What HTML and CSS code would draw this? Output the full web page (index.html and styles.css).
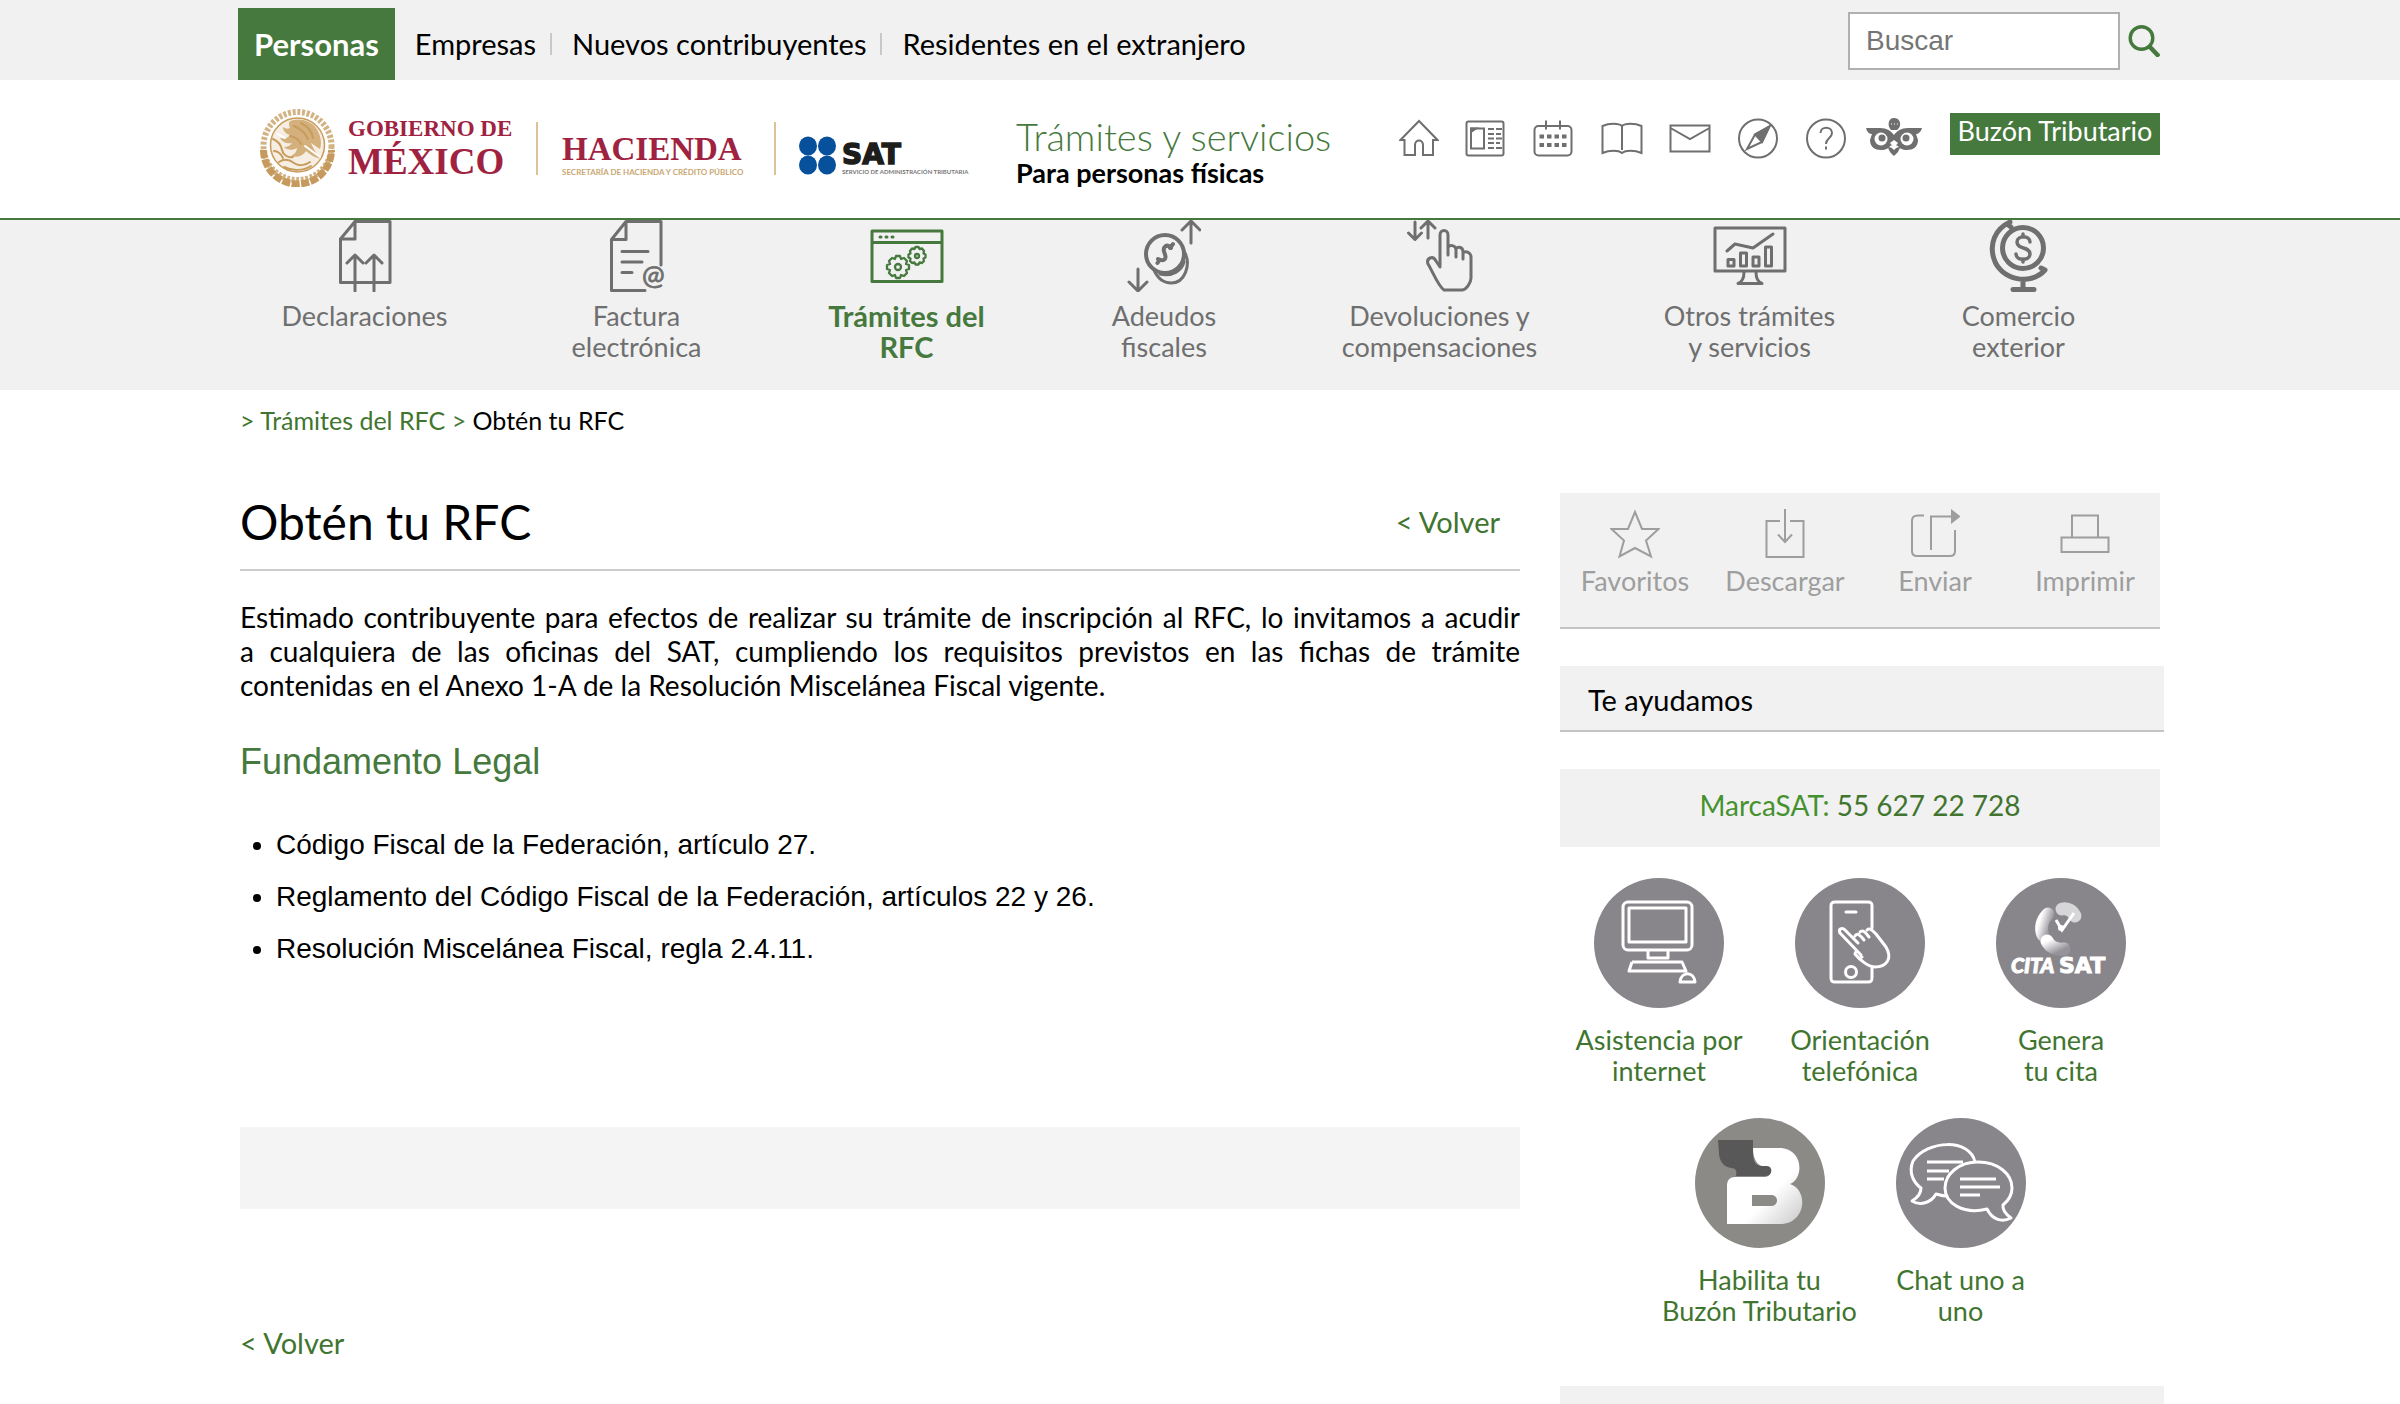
FILE: index.html
```html
<!DOCTYPE html>
<html lang="es">
<head>
<meta charset="utf-8">
<meta name="viewport" content="width=device-width, initial-scale=1">
<title>Obtén tu RFC - Trámites y servicios - SAT</title>
<link rel="stylesheet" href="styles.css">
</head>
<body>
<div class="topbar">
  <div class="container topbar-inner">
    <nav class="audience" aria-label="Tipo de contribuyente">
      <a class="tab tab-active" href="#">Personas</a>
      <a class="tab" href="#">Empresas</a>
      <a class="tab" href="#">Nuevos contribuyentes</a>
      <a class="tab" href="#">Residentes en el extranjero</a>
    </nav>
    <form class="search" role="search">
      <input class="search-input" type="search" placeholder="Buscar" aria-label="Buscar">
      <button class="search-button" type="submit" aria-label="Buscar">
        <svg width="32" height="32" viewBox="0 0 32 32" fill="none" stroke="#46793d" stroke-width="3.4"><circle cx="13.500" cy="13" r="11.300"/><path d="M21.500 21.500L31 31.500" stroke-width="4.500"/></svg>
      </button>
    </form>
  </div>
</div>

<header class="header">
  <div class="container header-inner">
    <a class="brand" href="#" aria-label="Gobierno de México, Hacienda, SAT">
      <svg width="716" height="80" viewBox="0 0 716 80">
        <g fill="none" stroke="#c79c5c">
          <circle cx="37.500" cy="39" r="34" stroke="#d3b283" stroke-width="6" stroke-dasharray="3 1.700"/>
          <path d="M3.500 43A34 34 0 0 0 71.500 43" stroke="#c59a5c" stroke-width="7" stroke-dasharray="8 1.500"/>
          <circle cx="37.500" cy="38" r="27" fill="#f6eee2" stroke-width="1.500"/>
        </g>
        <path d="M29 15c8-5 21-2 27 6 5 7 6 15 4 21l-9-6c3 8 8 14 11 16-6-1-12-4-16-8-3 5-9 7-15 5 4-2 6-5 6-8-5 3-10 2-13-1 4 0 7-2 8-4-6 1-10-1-12-5 5 1 8 0 10-3-4-1-7-4-7-8 3 2 5 2 7 1-1-2-1-4-1-6z" fill="#d3b07c"/>
        <g fill="none" stroke="#c79c5c" stroke-width="2" stroke-linecap="round">
          <path d="M13 32c5 2 8 6 9 11s6 8 11 7M14 44c4 0 7 3 9 7M19 55c6-4 11-2 15 1s11 3 16-1M24 60c8 4 19 4 27-1M34 19c5 2 11 6 14 13M41 16c6 3 11 8 12 15M30 29c5 1 9 4 11 8"/>
          <path d="M45 39l15 11M18 27l7 4" stroke="#fff"/>
        </g>
        <g fill="#9f2241" font-family="'Liberation Serif', serif" font-weight="700">
          <text x="88" y="29" font-size="23">GOBIERNO DE</text>
          <text x="88" y="67" font-size="37">MÉXICO</text>
          <text x="302" y="53" font-size="33">HACIENDA</text>
        </g>
        <path d="M277 15v53M515 15v53" stroke="#dcc19a" stroke-width="2"/>
        <text x="302" y="68" font-family="Lato, sans-serif" font-weight="700" font-size="8" fill="#c9a873">SECRETARÍA DE HACIENDA Y CRÉDITO PÚBLICO</text>
        <g fill="#07519c"><ellipse cx="548" cy="39" rx="9" ry="9.500"/><ellipse cx="567" cy="39" rx="9" ry="9.500"/><ellipse cx="548" cy="58" rx="9" ry="9.500"/><ellipse cx="567" cy="58" rx="9" ry="9.500"/></g>
        <text x="582" y="57" font-family="'DejaVu Sans', sans-serif" font-weight="700" font-size="28" fill="#1d1d1b" stroke="#1d1d1b" stroke-width="1.500">SAT</text>
        <text x="582" y="67" font-family="Lato, sans-serif" font-weight="700" font-size="6" fill="#777">SERVICIO DE ADMINISTRACIÓN TRIBUTARIA</text>
      </svg>
    </a>
    <div class="site-title">
      <p class="site-name">Trámites y servicios</p>
      <p class="site-sub">Para personas físicas</p>
    </div>
    <nav class="quick" aria-label="Accesos rápidos">
      <a href="#" aria-label="Inicio"><svg width="40" height="40" viewBox="0 0 40 40" class="line"><path d="M5 22H1.500L20 3l18.500 19H34v15H24V27c0-6-8-6-8 0v10H5.500V21"/></svg></a>
      <a href="#" aria-label="Noticias"><svg width="40" height="40" viewBox="0 0 40 40" class="line"><rect x="1.500" y="3.500" width="37" height="34" rx="2"/><path d="M6 10.500h13v20H6z"/><path d="M6 30V14l5-3.500H6z" fill="#6f6f6f"/><path d="M23 11h6M31 11h6M23 16h6M31 16h5M23 20.500h6M31 20.500h6M23 25h6M31 25h4M23 30h6M31 30h6"/></svg></a>
      <a href="#" aria-label="Calendario"><svg width="40" height="40" viewBox="0 0 40 40" class="line"><rect x="1.500" y="8" width="37" height="29.500" rx="4"/><path d="M13 2.500v9M27 2.500v9"/><path d="M6.500 18.500h27M6.500 27h27" stroke-width="4" stroke-dasharray="4.500 3"/></svg></a>
      <a href="#" aria-label="Biblioteca"><svg width="42" height="40" viewBox="0 0 42 40" class="line"><path d="M21 8c-3-3-13-3-19.500 0v27c7-3 16-3 19.500 0 3.500-3 12.500-3 19.500 0V8C34 5 24 5 21 8zM21 8v24"/></svg></a>
      <a href="#" aria-label="Correo"><svg width="42" height="40" viewBox="0 0 42 40" class="line"><path d="M1.500 7.500h39v26h-39zM1.500 10L21 21l19.500-11"/></svg></a>
      <a href="#" aria-label="Guía"><svg width="42" height="42" viewBox="0 0 42 42" class="line"><circle cx="21" cy="20.500" r="19"/><path d="M32.500 8.500L18 16.500 10 31l15-7z"/><path d="M32.500 8.500L18 16.500l7 7.500z" fill="#6f6f6f"/></svg></a>
      <a href="#" aria-label="Ayuda"><svg width="42" height="42" viewBox="0 0 42 42" class="line"><circle cx="21" cy="20.500" r="19"/><path d="M15.500 15c0-7 11.500-7 11.500 0 0 5-6 5-6 11M21 28.500v3"/></svg></a>
    </nav>
    <a class="owl" href="#" aria-label="Portal"><svg width="56" height="40" viewBox="0 0 56 40" fill="#6f6f6f"><path d="M28 0c5 0 8 5 5 10-1 1-2 2-2 2h-6c-4-4-3-12 3-12zM0 10h14c7 0 11 3 14 7 3-4 7-7 14-7h14c-1 4-4 6-6 6l2 6c0 7-5 10-11 10-5 0-8-2-9-4-1-1-7-1-8 0-1 2-4 4-9 4C9 32 4 29 4 22l2-6c-3 0-5-2-6-6z"/><circle cx="15" cy="21" r="6.500" fill="#fff"/><circle cx="41" cy="21" r="6.500" fill="#fff"/><circle cx="16" cy="20" r="3.500"/><circle cx="40" cy="20" r="3.500"/><path d="M28 22l4 3-4 5-4-5z" fill="#fff"/><path d="M22 29c3 0 4 1 6 3 2-2 3-3 6-3-1 5-4 7-6 9-2-2-5-4-6-9z"/><path d="M25 6h1M28 6h1M31 6h1" stroke="#fff"/></svg></a>
    <a class="mailbox" href="#">Buzón Tributario</a>
  </div>
</header>

<div class="mainnav">
  <div class="container">
    <nav class="mainnav-grid" aria-label="Trámites">
      <a class="nav-item" href="#"><svg width="56" height="72" viewBox="0 0 56 72" class="navline"><path d="M18 1.500h35v61H3.500V19z"/><path d="M18 1.500v17.500H3.500"/><path d="M18 71V36M10 43l8-8 8 8M37 71V36M29 43l8-8 8 8"/></svg><span>Declaraciones</span></a>
      <a class="nav-item" href="#"><svg width="58" height="72" viewBox="0 0 58 72" class="navline"><path d="M53 45V1.500H18L3.500 19.500v51H37M18 1.500v18H3.500M14 31.500h26M14 42h20M14 52.500h10"/><text x="34" y="65" font-family="Lato, sans-serif" font-size="27" fill="#6f6f6f" stroke="#6f6f6f" stroke-width=".8">@</text></svg><span>Factura<br>electrónica</span></a>
      <a class="nav-item nav-active" href="#"><svg width="74" height="72" viewBox="0 0 74 72" class="navline"><path d="M2 11h70v50.500H2zM2 22.500h70"/><path d="M10 17h1M16 17h1M22 17h1"/><g stroke-width="2.300"><path d="M26 36h4l1 3 3-1 3 3-1 3 3 1v4l-3 1 1 3-3 3-3-1-1 3h-4l-1-3-3 1-3-3 1-3-3-1v-4l3-1-1-3 3-3 3 1z"/><circle cx="28" cy="47" r="3"/><path d="M45.500 27h3l1 2 2.500-.500 2 2.500-.500 2.500 2 1v3l-2 1 .500 2.500-2 2-2.500-.500-1 2h-3l-1-2-2.500.500-2-2 .500-2.500-2-1v-3l2-1-.500-2.500 2-2.500 2.500.500z"/><circle cx="47" cy="36" r="2"/></g></svg><span>Trámites del<br>RFC</span></a>
      <a class="nav-item" href="#"><svg width="74" height="72" viewBox="0 0 74 72" class="navline"><circle cx="38" cy="34" r="19" stroke-width="4"/><path d="M57.500 32c7 13 0 31-13 31-8 0-14-4-18-14M57 42c-2 8-11 15-24 12" stroke-width="3"/><path d="M44 28c-4-5-9-1-6.500 5s0 9-6.500 6M30.500 43l2-3M43 28l3-4" stroke-width="4"/><path d="M64 23V3M55 10l9-9 9 9M11 49v20M2 62l9 9 9-9"/></svg><span>Adeudos<br>fiscales</span></a>
      <a class="nav-item" href="#"><svg width="66" height="72" viewBox="0 0 66 72" class="navline"><path d="M8 2v17M1.500 13L8 19.500 14.500 13M21 18V2M14 8l7-7 7 7M33 46V15c0-6 8-6 8 0v20M41 28c1-4 8-3 8 2v7M49 29c2-3 7-2 7 3v7M56 33c3-3 8 0 8 4v21c0 5-5 12-9 12H37c-6-4-11-18-16-26-2-6 5-9 8-3l4 6"/></svg><span>Devoluciones y<br>compensaciones</span></a>
      <a class="nav-item" href="#"><svg width="74" height="72" viewBox="0 0 74 72" class="navline"><path d="M2 8h70v43H2z"/><path d="M14 31l8-7 18 4 20-14M15 39.500h6V46h-6zM27.500 33h6v13h-6zM40 37h6v9h-6zM52.500 27h6v19h-6z"/><path d="M31 52c0 6-2 10-6 11.500h24c-4-1.500-6-5.500-6-11.500"/></svg><span>Otros trámites<br>y servicios</span></a>
      <a class="nav-item" href="#"><svg width="60" height="72" viewBox="0 0 60 72" class="navline"><circle cx="34" cy="28" r="20.500" stroke-width="5"/><path d="M21 2C6 9 0 24 5 39c6 20 36 28 51 11M18 4l4 3M52 48l4 2M34 60v9M24 69.500h21" stroke-width="5"/><path d="M41 22c0-7-13-7-13 0 0 8 13 4 13 12 0 7-14 7-14 0M34 14v3M34 39v3" stroke-width="3.500"/></svg><span>Comercio<br>exterior</span></a>
    </nav>
  </div>
</div>

<nav class="container breadcrumb" aria-label="Ruta">
  <a href="#">&gt; Trámites del RFC</a> <span class="crumb-sep">&gt;</span> <span>Obtén tu RFC</span>
</nav>

<div class="container columns">
  <main class="content">
    <div class="page-head">
      <h1>Obtén tu RFC</h1>
      <a class="back" href="#">&lt; Volver</a>
    </div>
    <p class="intro">Estimado contribuyente para efectos de realizar su trámite de inscripción al RFC, lo invitamos a acudir a&nbsp;cualquiera de las oficinas del SAT, cumpliendo los requisitos previstos en las fichas de trámite contenidas en el Anexo 1-A de la Resolución Miscelánea Fiscal vigente.</p>
    <h2>Fundamento Legal</h2>
    <ul class="legal">
      <li>Código Fiscal de la Federación, artículo 27.</li>
      <li>Reglamento del Código Fiscal de la Federación, artículos 22 y 26.</li>
      <li>Resolución Miscelánea Fiscal, regla 2.4.11.</li>
    </ul>
    <div class="band"></div>
    <a class="back back-bottom" href="#">&lt; Volver</a>
  </main>

  <aside class="sidebar">
    <div class="tools">
      <button type="button" class="tool"><svg width="50" height="50" viewBox="0 0 50 50" class="toolline"><path d="M25 3l7 17h16.500L36 31.500 41 47.500 25 39 9.500 47.500 14 31.500 1.500 20H18z"/></svg>Favoritos</button>
      <button type="button" class="tool"><svg width="50" height="50" viewBox="0 0 50 50" class="toolline"><path d="M20 12H6.500v36h37V12H30M25 0v32M18 25.500l7 7.500 7-7.500"/></svg>Descargar</button>
      <button type="button" class="tool"><svg width="50" height="50" viewBox="0 0 50 50" class="toolline"><path d="M14 6.500H8c-4 0-6 2-6 5V42c0 3 2 5 5 5h33c3 0 5-2 5-5V21M21 41V7.500h22"/><path d="M42 2v11l7-5.500z" fill="#9e9e9e"/></svg>Enviar</button>
      <button type="button" class="tool"><svg width="50" height="50" viewBox="0 0 50 50" class="toolline"><path d="M12 28V6.500h26V28M1.500 28.500h47v14.500h-47z"/></svg>Imprimir</button>
    </div>
    <h3 class="panel-title">Te ayudamos</h3>
    <p class="phone"><span class="phone-label">MarcaSAT:</span> <a href="tel:5562722728">55 627 22 728</a></p>
    <div class="help">
      <a class="help-item" href="#"><svg width="130" height="130" viewBox="0 0 130 130"><circle cx="65" cy="65" r="65" fill="#89868b"/><g fill="none" stroke="#fff" stroke-width="3" stroke-linejoin="round"><rect x="29" y="24" width="69" height="48" rx="5"/><path d="M35 30h57v34H35zM54 73v7h20v-7M38 84h50l4 9H35l3-9M86 104c1-11 14-11 15 0z"/></g></svg><span>Asistencia por<br>internet</span></a>
      <a class="help-item" href="#"><svg width="130" height="130" viewBox="0 0 130 130"><circle cx="65" cy="65" r="65" fill="#89868b"/><g fill="none" stroke="#fff" stroke-width="3" stroke-linejoin="round" stroke-linecap="round"><path d="M77 50V28c0-3-1-4-4-4H40c-3 0-4 1-4 4v72c0 3 1 4 4 4h33c3 0 4-1 4-4V89M51 34h10"/><circle cx="56" cy="94" r="5.500"/><path d="M66 77L45 55c-2-4 2-6 5-3l13 13M60 58c2-4 6 0 9 4M65 54c3-3 6 1 9 5M72 52c3-3 7 2 9 4l10 13c7 12 0 20-11 20-7 0-16-8-20-13 1-5 4-2 7 3"/></g></svg><span>Orientación<br>telefónica</span></a>
      <a class="help-item" href="#"><svg width="130" height="130" viewBox="0 0 130 130"><defs><linearGradient id="arc" x1="0" y1="0" x2="1" y2="1"><stop offset="0" stop-color="#fff"/><stop offset="1" stop-color="#96939a"/></linearGradient></defs><circle cx="65" cy="65" r="65" fill="#89868b"/><g fill="none" stroke="url(#arc)" stroke-width="13" stroke-linecap="round"><path d="M52 36c-6 6-8 14-5 21"/><path d="M51 63c3 6 9 9 17 8"/><path d="M66 31c5-1 10 1 13 7" stroke="#d6d5d8"/></g><path d="M60 42l6 10 12-17" fill="none" stroke="#fff" stroke-width="3"/><circle cx="65" cy="50" r="3" fill="#fff"/><g font-weight="900" fill="#fff" stroke="#fff"><text x="15" y="95" font-size="21" font-style="italic" font-family="Lato, sans-serif">CITA</text><text x="63" y="95" font-size="22" font-family="'DejaVu Sans', sans-serif">SAT</text></g></svg><span>Genera<br>tu cita</span></a>
      <a class="help-item" href="#"><svg width="130" height="130" viewBox="0 0 130 130"><defs><linearGradient id="bee" x1="0" y1="0" x2="1" y2="1"><stop offset=".6" stop-color="#fff"/><stop offset="1" stop-color="#c9c9c9"/></linearGradient></defs><circle cx="65" cy="65" r="65" fill="#8b8a87"/><path d="M58 30h26c25 0 25 31 11 36 19 6 16 40-10 40H32V68c0-6 3-9 8-9h30c7 0 6-10 0-10-8-1-12-8-12-19z" fill="url(#bee)"/><path d="M57 77h19c8 0 8 11 0 11H57z" fill="#8b8a87"/><path d="M23 22h35v14c0 8 3 12 9 12h5c6 0 6 10-1 10H41c1-5 0-8-5-8-8-1-12-8-12-15z" fill="#585858"/></svg><span>Habilita tu<br>Buzón Tributario</span></a>
      <a class="help-item" href="#"><svg width="130" height="130" viewBox="0 0 130 130"><circle cx="65" cy="65" r="65" fill="#89868b"/><g fill="none" stroke="#fff" stroke-width="3" stroke-linejoin="round"><path d="M79 44C74 20 31 22 17 43c-5 12 1 22 8 27 0 6-4 10-9 13 8 5 19 2 24-7 4 1 6 2 10 2"/><path d="M82 44c20 0 34 12 34 26 0 7-4 13-9 17-1 6 4 10 8 13-10 5-19 1-24-9-24 6-42-6-42-21 0-14 14-26 33-26zM31 44h36M31 53h22M31 61h17M64 61h36M64 69h40M64 77h20"/></g></svg><span>Chat uno a<br>uno</span></a>
    </div>
    <div class="panel-next"></div>
  </aside>
</div>
</body>
</html>
```
FILE: styles.css
```css
* { box-sizing: border-box; }

body {
  margin: 0;
  background: #fff;
  color: #000;
  font-family: Lato, "Open Sans", sans-serif;
  font-size: 27px;
  line-height: 34px;
}

h1, h2, h3, p, ul { margin: 0; padding: 0; font-weight: 400; }
a { color: #41752f; text-decoration: none; }
svg { display: block; flex: none; }

.container { max-width: 1920px; margin: 0 auto; }

.topbar { background: #f1f1f1; }
.topbar-inner { display: flex; justify-content: space-between; height: 80px; }
.audience { display: flex; align-items: center; margin-left: -2px; padding-top: 8px; font-size: 29px; }
.tab { color: #000; padding-right: 14px; margin-right: 20px; line-height: 22px; border-right: 2px solid #c8c8c8; }
.tab:last-child { border-right: 0; }
.tab-active {
  align-self: stretch;
  padding: 0 16px;
  line-height: 72px;
  border: 0;
  background: #46793d;
  color: #fff;
  font-size: 31px;
  font-weight: 700;
}
.search { display: flex; align-items: center; gap: 8px; padding-top: 2px; }
.search-input {
  width: 272px;
  height: 58px;
  padding: 0 16px;
  border: 2px solid #b0b0b0;
  border-radius: 0;
  background: #fff;
  font: 28px "Liberation Sans", Arial, sans-serif;
  appearance: none;
}
.search-input::placeholder { color: #757575; }
.search-button { padding: 0; border: 0; background: none; }

.header { border-bottom: 2px solid #46793d; }
.header-inner { display: flex; align-items: flex-start; height: 138px; }
.brand { padding: 27px 40px 0 20px; }
.site-title { padding-top: 36px; white-space: nowrap; }
.site-name { font-size: 38px; line-height: 40px; font-weight: 300; color: #46793d; }
.site-sub { font-size: 27px; line-height: 34px; font-weight: 700; }
.quick { display: flex; gap: 26px; margin-left: auto; padding-top: 38px; }
.quick a { width: 42px; }
.quick a:first-child { width: 40px; }
.line { fill: none; stroke: #6f6f6f; stroke-width: 2; }
.owl { padding-top: 38px; margin-left: 19px; }
.mailbox {
  width: 210px;
  height: 42px;
  margin: 33px 0 0 28px;
  background: #46793d;
  color: #fff;
  line-height: 36px;
  text-align: center;
  white-space: nowrap;
}

.mainnav { background: #f1f1f1; }
.mainnav-grid {
  display: grid;
  grid-template-columns: 289fr 255fr 285fr 230fr 321fr 299fr 239fr;
  margin: 0 22px 0 -20px;
  min-height: 170px;
}
.nav-item {
  display: flex;
  flex-direction: column;
  align-items: center;
  gap: 8px;
  color: #6f6f6f;
  line-height: 31px;
  text-align: center;
}
.navline { fill: none; stroke: #6f6f6f; stroke-width: 3; stroke-linecap: round; stroke-linejoin: round; }
.nav-active { color: #46793d; font-size: 29px; font-weight: 700; }
.nav-active .navline { stroke: #46793d; }

.breadcrumb { font-size: 25px; line-height: 60px; }
.crumb-sep { color: #46793d; }

.columns { display: flex; justify-content: space-between; align-items: flex-start; padding-top: 43px; }
.content { width: 1280px; }
.page-head {
  display: flex;
  justify-content: space-between;
  align-items: center;
  padding: 0 20px 18px 0;
  border-bottom: 2px solid #ccc;
}
h1 { font-size: 48px; line-height: 58px; }
.back { font-size: 29px; }
.intro { margin-top: 29px; font-size: 28px; text-align: justify; }
h2 {
  margin-top: 40px;
  font: 36px/40px "Liberation Sans", Arial, sans-serif;
  color: #46793d;
}
.legal {
  margin-top: 37px;
  padding-left: 36px;
  font: 28px/52px "Liberation Sans", Arial, sans-serif;
}
.band { height: 82px; margin-top: 152px; background: #f4f4f4; }
.back-bottom { display: inline-block; margin-top: 117px; }

.sidebar { width: 600px; }
.tools {
  display: grid;
  grid-template-columns: repeat(4, 1fr);
  padding: 16px 0 29px;
  border-bottom: 2px solid #c4c4c4;
  background: #f1f1f1;
}
.tool {
  display: flex;
  flex-direction: column;
  align-items: center;
  gap: 5px;
  padding: 0;
  border: 0;
  background: none;
  color: #9e9e9e;
  font: inherit;
}
.toolline { fill: none; stroke: #9e9e9e; stroke-width: 2; }
.panel-title {
  margin: 37px -4px 0 0;
  padding: 4px 28px 0;
  border-bottom: 2px solid #c4c4c4;
  background: #f1f1f1;
  font-size: 29px;
  line-height: 60px;
}
.phone { height: 78px; margin-top: 37px; background: #f1f1f1; font-size: 28px; line-height: 72px; text-align: center; }
.phone-label { color: #46912f; }
.help { display: flex; flex-wrap: wrap; justify-content: center; row-gap: 32px; margin: 31px -2px 0; }
.help-item {
  display: flex;
  flex-direction: column;
  align-items: center;
  gap: 16px;
  width: 201px;
  line-height: 31px;
  text-align: center;
  white-space: nowrap;
}
.panel-next { min-height: 18px; margin: 60px -4px 0 0; background: #f1f1f1; }
```
